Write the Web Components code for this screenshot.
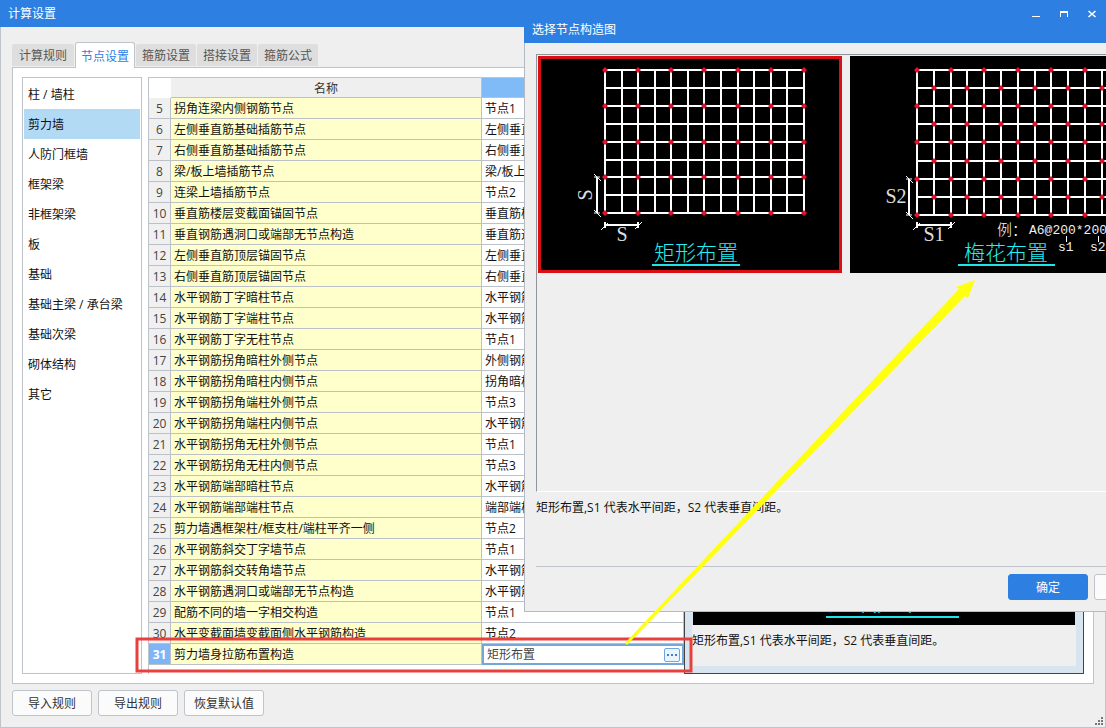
<!DOCTYPE html>
<html lang="zh-CN">
<head>
<meta charset="utf-8">
<title>计算设置</title>
<style>
  body { margin: 0; font: 12px/20px "Open Sans", "Noto Sans CJK SC", sans-serif; color: #111; }
</style>
</head>
<body>
<settings-window></settings-window>
<script>
const define = (name, html, setup) => customElements.define(name, class extends HTMLElement {
  constructor() {
    super();
    this.attachShadow({ mode: 'open' }).innerHTML =
      '<style>*{box-sizing:border-box}button,input{font:inherit;color:inherit}</style>' + html;
  }
  connectedCallback() {
    if (setup && !this.ready) { this.ready = true; setup(this, this.shadowRoot); }
  }
});

define('title-bar', `
<style>
  :host { display: flex; align-items: center; height: 27px; padding-left: 8px; background: #2d7fe2; color: #fff; }
  .title { flex: 1; }
</style>
<span class="title"><slot></slot></span>`);

define('window-controls', `
<style>
  :host { display: flex; height: 100%; }
  button { width: 28px; height: 27px; padding: 0; border: 0; background: none; display: grid; place-items: center; }
  svg { fill: none; stroke: #fff; display: block; }
</style>
<button aria-label="最小化"><svg width="10" height="8"><path d="M1 6.5h8"/></svg></button>
<button aria-label="最大化"><svg width="10" height="8"><path d="M1 2h8" stroke-width="2"/><path d="M1.5 2v5M8.500 2v5"/></svg></button>
<button aria-label="关闭"><svg width="10" height="8"><path d="M1.500 1L8.500 7M8.500 1L1.500 7" stroke-width="1.600"/></svg></button>`);

define('push-button', `
<style>
  :host { display: block; width: 80px; flex: none; }
  button { display: block; width: 100%; height: 26px; padding: 2px 0 0; border: 1px solid #bfc3ca; border-radius: 3px; background: #fbfbfc; color: #333; line-height: 22px; white-space: nowrap; }
  :host([primary]) button { background: #2d7fe2; border-color: #2d7fe2; color: #fff; }
</style>
<button type="button"><slot></slot></button>`, (el, root) => {
  const label = el.getAttribute('label');
  if (label) root.querySelector('button').setAttribute('aria-label', label);
});

define('tab-strip', `
<style>
  :host { display: block; height: 26px; margin-bottom: -1px; position: relative; }
  .list { display: flex; align-items: flex-end; gap: 1px; height: 26px; }
  button { height: 22px; margin: 0 0 2px; padding: 2px 0 0; width: 60px; border: 0; border-radius: 2px 2px 0 0; background: #dedede; color: #555; line-height: 20px; white-space: nowrap; }
  button:first-child { width: 62px; }
  button[aria-selected=true] { height: 26px; margin: 0; border: 1px solid #bfc3ca; border-bottom: 0; border-radius: 3px 3px 0 0; background: #fff; color: #2d7fe2; }
</style>
<div class="list" role="tablist"></div>`, (el, root) => {
  root.querySelector('.list').innerHTML = ['计算规则', '节点设置', '箍筋设置', '搭接设置', '箍筋公式']
    .map((t, i) => `<button role="tab" aria-selected="${i === 1}">${t}</button>`).join('');
});

define('category-list', `
<style>
  :host { display: block; border: 1px solid #bfc3ca; padding: 1px; background: #fff; }
  ul { list-style: none; margin: 0; padding: 0; }
  button { display: block; width: 100%; height: 30px; padding: 2px 4px 0; border: 0; background: none; text-align: left; line-height: 28px; white-space: nowrap; word-spacing: normal; }
  button[aria-current] { background: #b3daf5; }
</style>
<ul></ul>`, (el, root) => {
  root.querySelector('ul').innerHTML = ['柱 / 墙柱', '剪力墙', '人防门框墙', '框架梁', '非框架梁', '板', '基础', '基础主梁 / 承台梁', '基础次梁', '砌体结构', '其它']
    .map((t, i) => `<li><button${i === 1 ? ' aria-current="true"' : ''}>${t}</button></li>`).join('');
});

const rows = [
  ['拐角连梁内侧钢筋节点', '节点1'],
  ['左侧垂直筋基础插筋节点', '左侧垂直筋基础插筋节点'],
  ['右侧垂直筋基础插筋节点', '右侧垂直筋基础插筋节点'],
  ['梁/板上墙插筋节点', '梁/板上墙插筋节点'],
  ['连梁上墙插筋节点', '节点2'],
  ['垂直筋楼层变截面锚固节点', '垂直筋楼层变截面锚固节点'],
  ['垂直钢筋遇洞口或端部无节点构造', '垂直筋遇洞口'],
  ['左侧垂直筋顶层锚固节点', '左侧垂直筋顶层锚固节点'],
  ['右侧垂直筋顶层锚固节点', '右侧垂直筋顶层锚固节点'],
  ['水平钢筋丁字暗柱节点', '水平钢筋丁字暗柱节点'],
  ['水平钢筋丁字端柱节点', '水平钢筋丁字端柱节点'],
  ['水平钢筋丁字无柱节点', '节点1'],
  ['水平钢筋拐角暗柱外侧节点', '外侧钢筋'],
  ['水平钢筋拐角暗柱内侧节点', '拐角暗柱'],
  ['水平钢筋拐角端柱外侧节点', '节点3'],
  ['水平钢筋拐角端柱内侧节点', '水平钢筋'],
  ['水平钢筋拐角无柱外侧节点', '节点1'],
  ['水平钢筋拐角无柱内侧节点', '节点3'],
  ['水平钢筋端部暗柱节点', '水平钢筋'],
  ['水平钢筋端部端柱节点', '端部端柱'],
  ['剪力墙遇框架柱/框支柱/端柱平齐一侧', '节点2'],
  ['水平钢筋斜交丁字墙节点', '节点1'],
  ['水平钢筋斜交转角墙节点', '水平钢筋'],
  ['水平钢筋遇洞口或端部无节点构造', '水平钢筋'],
  ['配筋不同的墙一字相交构造', '节点1'],
  ['水平变截面墙变截面侧水平钢筋构造', '节点2'],
  ['剪力墙身拉筋布置构造', '矩形布置']
];

define('node-table', `
<style>
  :host { display: block; border: 1px solid #bfc3ca; border-width: 1px 0 0 1px; background: #fff; }
  table { width: 100%; table-layout: fixed; border-collapse: separate; border-spacing: 0; }
  .num { width: 22px; } .value { width: 202px; }
  th, td { height: 21px; padding: 2px 3px 0; border: solid #bcc0c8; border-width: 0 1px 1px 0; font-weight: 400; line-height: 18px; text-align: left; white-space: nowrap; overflow: hidden; }
  thead th { height: 20px; padding-top: 2px; line-height: 17px; background: #efefef; text-align: center; color: #333; }
  thead th:first-child { background: #fff; border-color: #fff; }
  thead th:last-child { background: #80bbf8; }
  tbody th { padding: 2px 0 0; text-align: center; background: #f0f0f0; color: #444; }
  .name { background: #ffffcc; }
  tr.current th { background: #80b5f5; color: #fff; font-weight: 700; }
  td.edit { padding: 0; border: 0; }
  .editor { display: flex; align-items: center; height: 21px; border: 2px solid #73a6d9; background: #fff; padding: 0 2px 0 3px; }
  .editor input { flex: 1; min-width: 0; height: 17px; padding: 1px 0 0; border: 0; outline: 0; background: none; color: #444; }
  .editor button { display: grid; place-items: center; width: 16px; height: 14px; padding: 0; border: 1px solid #6fa6de; border-radius: 2px; background: #eaf4ff; }
  svg { display: block; fill: #3f7fc4; }
</style>
<table>
  <colgroup><col class="num"><col><col class="value"></colgroup>
  <thead><tr><th aria-label="序号"></th><th>名称</th><th aria-label="值"></th></tr></thead>
  <tbody></tbody>
</table>`, (el, root) => {
  root.querySelector('tbody').innerHTML = rows.map(([name, value], i) => {
    const current = i === rows.length - 1;
    const cell = current
      ? `<td class="edit"><div class="editor"><input aria-label="${name}" value="${value}"><button aria-label="选择"><svg width="10" height="2"><path d="M0 0h2v2H0zM4 0h2v2H4zM8 0h2v2H8z"/></svg></button></div></td>`
      : `<td>${value}</td>`;
    return `<tr${current ? ' class="current"' : ''}><th scope="row">${i + 5}</th><td class="name">${name}</td>${cell}</tr>`;
  }).join('');
});

define('node-preview', `
<style>
  :host { display: flex; flex-direction: column; border: 1px solid #444; background: #d8e4ef; padding: 7px; }
  .picture { flex: 1; display: flex; align-items: flex-end; justify-content: center; margin: 0 1px; padding: 0 0 7px 17px; background: #000; }
  .picture span { width: 133px; padding-bottom: 4px; border-bottom: 2px solid #21e4ea; color: #21e4ea; font: 300 32px/32px "Noto Sans CJK SC", sans-serif; text-align: center; }
  p { height: 41px; margin: 0; padding-top: 6px; background: #efefef; }
</style>
<div class="picture"><span>矩形布置</span></div>
<p><slot></slot></p>`);

/* Rebar mesh drawing: "rect" ties every second crossing, "plum" staggers the ties. */
define('mesh-figure', `
<style>
  :host { display: block; flex: none; width: 304px; height: 217px; background: #000; }
  :host([selected]) { box-shadow: inset 0 0 0 3px #d90f14; }
  svg { display: block; }
  .w { stroke: #fff; stroke-width: 2; fill: none; }
  .t { stroke: #fff; stroke-width: 1; fill: none; }
  .dot { fill: #e6102c; }
  .dim { fill: #ddd; font: 20px "Liberation Serif", serif; text-anchor: middle; }
  .note { fill: #eee; font: 13px "Liberation Mono", monospace; }
  .han { fill: #fff; font: 15px "Noto Sans CJK SC", sans-serif; font-weight: 300; }
  .cap { fill: #21f0f4; font: 21px "Noto Sans CJK SC", sans-serif; font-weight: 300; text-anchor: middle; }
  .u { stroke: #21e4ea; stroke-width: 2; }
</style>
<svg width="304" height="217"></svg>`, (el, root) => {
  const plum = el.getAttribute('kind') === 'plum';
  const step = plum ? 16.8 : 16.58, vstep = plum ? 18.1 : 17.9;
  const xs = Array.from({ length: 13 }, (_, i) => Math.round(67 + i * step));
  const ys = Array.from({ length: 9 }, (_, i) => Math.round(14 + i * vstep));
  let s = `<path class="w" d="${xs.map(x => `M${x} ${ys[0]}V${ys[8]}`).join('')}${ys.map(y => `M${xs[0] - 1} ${y}H${xs[12] + 1}`).join('')}"/>`;
  let d = '';
  ys.forEach((y, j) => xs.forEach((x, i) => {
    if (plum ? (i + j) % 2 === 0 : i % 2 === 0 && j % 2 === 0) d += `M${x - 3} ${y}l3-3 3 3-3 3z`;
  }));
  s += `<path class="dot" d="${d}"/>`;
  const a = ys[6], b = ys[8], h = b + (plum ? 10 : 12), c = xs[0], e = xs[2];
  s += `<path class="w" d="M59 ${a}V${b}M${c} ${h}H${e}M${c} ${h - 3}v6M${e} ${h - 3}v6"/>`;
  s += `<path class="t" d="M56 ${a - 3}l7 7M56 ${b - 3}l7 7M56 ${a}h6M56 ${b}h6M${c - 4} ${h + 5}l7-7M${e - 3} ${h + 4}l7-7"/>`;
  s += plum
    ? `<text class="dim" x="46" y="147">S2</text><text class="dim" x="84" y="185">S1</text>
       <text class="han" x="147" y="179">例：</text><text class="note" x="179" y="178">A6@200*200</text>
       <path class="t" d="M216.500 180v6M248.500 180v6"/>
       <text class="note" x="208" y="195">s1</text><text class="note" x="240" y="195">s2</text>
       <text class="cap" x="156" y="204">梅花布置</text><path class="u" d="M108 209h97"/>`
    : `<text class="dim" transform="translate(54 139) rotate(-90)">S</text><text class="dim" x="84" y="185">S</text>
       <text class="cap" x="158" y="204">矩形布置</text><path class="u" d="M114 209h88"/>`;
  root.querySelector('svg').innerHTML = s;
});

define('node-dialog', `
<style>
  :host { display: block; }
  title-bar { height: 26px; }
  .body { padding: 11px 11px 0; border: 1px solid #b4bac4; border-top: 0; background: #efefef; }
  .gallery { display: flex; gap: 8px; height: 438px; padding: 1px; border: solid #8f959c; border-width: 1px 0 0 1px; border-bottom: 1px solid #fff; overflow: hidden; }
  p { height: 75px; margin: 0; padding-top: 6px; border-bottom: 1px solid #bfc3ca; }
  footer { display: flex; justify-content: flex-end; gap: 6px; padding: 7px 0 11px; }
</style>
<title-bar>选择节点构造图</title-bar>
<div class="body">
  <div class="gallery"><mesh-figure kind="rect" selected></mesh-figure><mesh-figure kind="plum"></mesh-figure></div>
  <p>矩形布置,S1 代表水平间距，S2 代表垂直间距。</p>
  <footer><push-button primary>确定</push-button><push-button label="取消"></push-button></footer>
</div>`);

define('callout-marks', `
<style>
  :host { display: block; pointer-events: none; }
  svg { display: block; }
</style>
<svg width="850" height="400" viewBox="130 275 850 400">
  <rect x="137" y="639" width="554" height="32" fill="none" stroke="#e8403c" stroke-width="3"/>
  <path d="M625 643L959 289L956 287L975 280L968 298L965 296L627 645Z" fill="#ffff10"/>
</svg>`);

define('settings-window', `
<style>
  :host { display: flex; flex-direction: column; position: relative; min-height: 100vh; overflow: hidden; background: #efefef; }
  main { flex: 1; display: flex; flex-direction: column; padding: 15px 11px 11px; border: 1px solid #bfc3ca; border-top: 0; }
  .panel { flex: 1; display: grid; grid-template-columns: 120px 542px 1fr; padding: 9px; border: 1px solid #bfc3ca; background: #fff; }
  node-table { margin-left: 6px; }
  footer { display: flex; gap: 6px; padding-top: 6px; }
  node-dialog { position: absolute; left: 524px; top: 17px; right: -80px; }
  window-controls { position: absolute; right: 0; top: 0; height: 27px; }
  callout-marks { position: absolute; left: 130px; top: 275px; }
  .grip { position: absolute; right: 3px; bottom: 3px; fill: #777; }
</style>
<title-bar>计算设置</title-bar>
<main>
  <tab-strip></tab-strip>
  <div class="panel">
    <category-list></category-list>
    <node-table></node-table>
    <node-preview>矩形布置,S1 代表水平间距，S2 代表垂直间距。</node-preview>
  </div>
  <footer><push-button>导入规则</push-button><push-button>导出规则</push-button><push-button>恢复默认值</push-button></footer>
</main>
<svg class="grip" width="8" height="8"><path d="M6 0h2v2H6zM3 3h2v2H3zM6 3h2v2H6zM0 6h2v2H0zM3 6h2v2H3zM6 6h2v2H6z"/></svg>
<node-dialog></node-dialog>
<window-controls></window-controls>
<callout-marks></callout-marks>`);
</script>
</body>
</html>
